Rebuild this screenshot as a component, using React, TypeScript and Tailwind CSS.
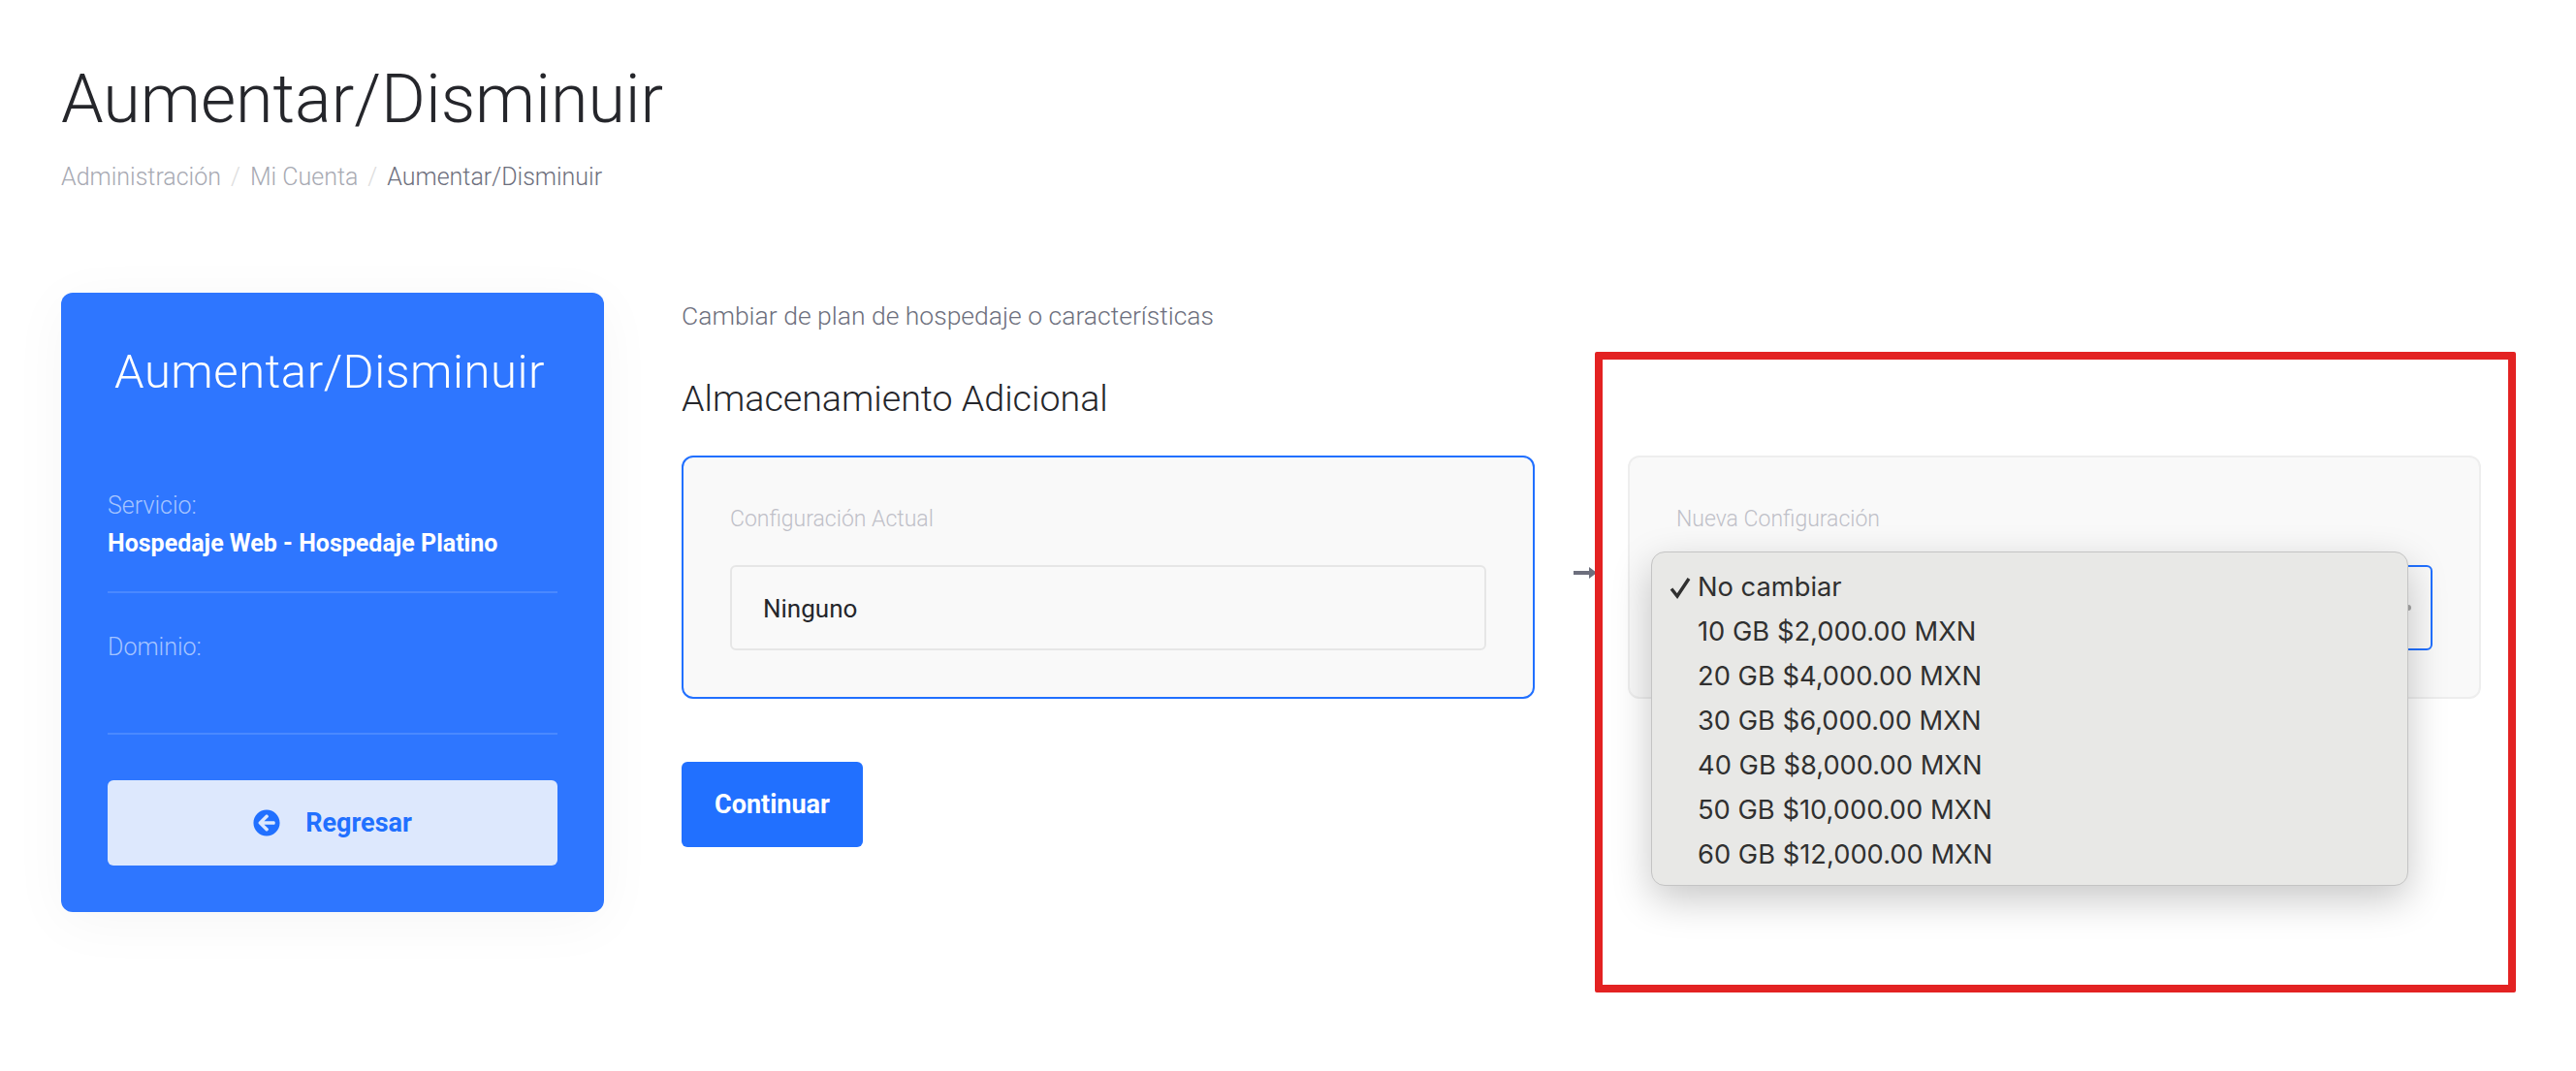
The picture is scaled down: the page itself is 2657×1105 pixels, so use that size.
import { FaArrowCircleLeft } from "react-icons/fa";

const titleFont = "font-['Roboto',sans-serif]";
const options = [
  "No cambiar",
  "10 GB $2,000.00 MXN",
  "20 GB $4,000.00 MXN",
  "30 GB $6,000.00 MXN",
  "40 GB $8,000.00 MXN",
  "50 GB $10,000.00 MXN",
  "60 GB $12,000.00 MXN",
];

function Sidebar() {
  return (
    <aside className="w-[560px] h-[639px] shrink-0 rounded-[12px] bg-[#2e76ff] px-[48px] pt-[54px] text-white shadow-[0_10px_60px_rgba(0,0,0,0.04)]">
      <h2 className="mr-[6px] text-center text-[49px] leading-[56px] font-light tracking-[0.5px]">Aumentar/Disminuir</h2>
      <div className="mt-[93px] border-b-2 border-[#4a89ff] pb-[33px]">
        <p className="text-[25px] leading-[34px] font-light text-[#a5c4ff]">Servicio:</p>
        <p className="mt-[6px] text-[25px] leading-[32px] font-bold">Hospedaje Web - Hospedaje Platino</p>
      </div>
      <div className="mt-[39px] h-[107px] border-b-2 border-[#4a89ff]">
        <p className="text-[25px] leading-[34px] font-light text-[#a5c4ff]">Dominio:</p>
      </div>
      <button className="mt-[47px] flex h-[88px] w-full items-center justify-center gap-[26px] rounded-[6px] bg-[#dde8fd] text-[27px] font-bold text-[#2170ff]">
        <FaArrowCircleLeft className="text-[28px]" />
        <span>Regresar</span>
      </button>
    </aside>
  );
}

function ConfigBox({ label, active, children }: { label: string; active?: boolean; children: React.ReactNode }) {
  return (
    <div
      className={`h-[251px] w-[880px] rounded-[12px] border-2 bg-[#f9f9f9] px-[48px] pt-[48px] ${active ? "border-[#2170ff]" : "border-[#eeeeee]"}`}
    >
      <p className="text-[23px] leading-[32px] font-light text-[#bfc0c8]">{label}</p>
      {children}
    </div>
  );
}

function Popup() {
  return (
    <div className="absolute left-[1703px] top-[569px] w-[781px] h-[345px] rounded-[14px] border border-[#c4c4c4] bg-[#e8e8e6] pt-[13px] font-['Inter',sans-serif] text-[27.3px] text-[#303030] shadow-[0_14px_40px_rgba(0,0,0,0.22)]">
      {options.map((o, i) => (
        <div key={o} className="relative h-[46px] pl-[47px] leading-[46px]">
          {i === 0 && (
            <svg viewBox="0 0 24 24" className="absolute left-[17px] top-[11px] h-[24px] w-[24px]" fill="none" stroke="#303030" strokeWidth="3.4">
              <path d="M3 13.5 9 21 21 3" />
            </svg>
          )}
          {o}
        </div>
      ))}
    </div>
  );
}

export default function App() {
  return (
    <div className={`relative h-[1105px] w-full overflow-hidden bg-white pl-[63px] pt-[60px] ${titleFont}`}>
      <h1 className="text-[70px] leading-[84px] font-light text-[#25262b]">Aumentar/Disminuir</h1>
      <nav className="mt-[22px] flex gap-[10px] text-[25px] leading-[34px] font-light text-[#a8aab3]">
        <span>Administración</span>
        <span className="text-[#dddddd]">/</span>
        <span>Mi Cuenta</span>
        <span className="text-[#dddddd]">/</span>
        <span className="text-[#6d6f7d]">Aumentar/Disminuir</span>
      </nav>
      <div className="mt-[102px] flex gap-[80px]">
        <Sidebar />
        <main className="pt-[8px]">
          <p className="text-[26.5px] leading-[32px] font-light text-[#6d6f7d]">Cambiar de plan de hospedaje o características</p>
          <h3 className="mt-[47px] text-[37.6px] leading-[44px] font-light text-[#25262b]">Almacenamiento Adicional</h3>
          <div className="mt-[37px] flex items-center">
            <ConfigBox label="Configuración Actual" active>
              <div className="mt-[31px] flex h-[88px] w-[780px] items-center rounded-[6px] border-2 border-[#e6e6e6] px-[32px] text-[26px] text-[#25262b]">
                <span className="mt-[2px]">Ninguno</span>
              </div>
            </ConfigBox>
            <div className="flex w-[96px] justify-center">
              <svg viewBox="0 0 24 12" className="mb-[10px] ml-[8px] h-[12px] w-[24px] text-[#6d6f7d]" fill="currentColor">
                <path d="M0 4h16V0l8 6-8 6V8H0z" />
              </svg>
            </div>
            <ConfigBox label="Nueva Configuración">
              <div className="mt-[31px] flex h-[88px] w-[780px] items-center justify-end rounded-[6px] border-2 border-[#2170ff] px-[20px]">
                <span className="h-[6px] w-[6px] rounded-full bg-[#a8a8a8]" />
              </div>
            </ConfigBox>
          </div>
          <button className="mt-[65px] h-[88px] w-[187px] rounded-[6px] bg-[#2170ff] text-[27px] font-bold text-white">Continuar</button>
        </main>
      </div>
      <Popup />
      <div className="pointer-events-none absolute left-[1645px] top-[363px] h-[661px] w-[950px] rounded-[2px] border-[8px] border-[#e32222]" />
    </div>
  );
}
